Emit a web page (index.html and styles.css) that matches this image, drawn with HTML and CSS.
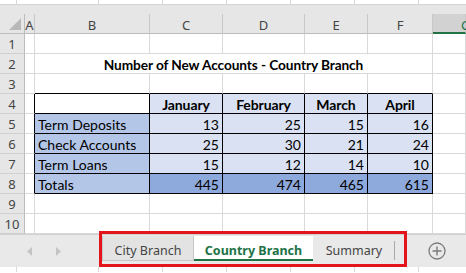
FILE: index.html
```html
<!DOCTYPE html>
<html>
<head>
<meta charset="utf-8">
<link rel="stylesheet" href="styles.css">
</head>
<body>
<div class="app">
  <div class="strip"></div>
  <div class="hdr-pad"></div>
  <div class="sheet">
    <div class="corner"><svg width="13" height="13" viewBox="0 0 13 13"><polygon points="12,0 12,12 0,12" fill="#b9b9b9"/></svg></div>
    <div class="ch">A</div><div class="ch">B</div><div class="ch">C</div><div class="ch">D</div><div class="ch">E</div><div class="ch">F</div><div class="ch sel">G</div>

    <div class="rh">1</div><div class="c"></div><div class="c"></div><div class="c"></div><div class="c"></div><div class="c"></div><div class="c"></div><div class="c"></div>

    <div class="rh">2</div><div class="c"></div><div class="c title">Number of New Accounts - Country Branch</div><div class="c"></div>

    <div class="rh">3</div><div class="c"></div><div class="c bb"></div><div class="c bb"></div><div class="c bb"></div><div class="c bb"></div><div class="c bb"></div><div class="c"></div>

    <div class="rh">4</div><div class="c br"></div><div class="c t"></div><div class="c t lt th">January</div><div class="c t lt th">February</div><div class="c t lt th">March</div><div class="c t lt th">April</div><div class="c"></div>

    <div class="rh">5</div><div class="c br"></div><div class="c t md">Term Deposits</div><div class="c t lt n">13</div><div class="c t lt n">25</div><div class="c t lt n">15</div><div class="c t lt n">16</div><div class="c"></div>

    <div class="rh">6</div><div class="c br"></div><div class="c t md">Check Accounts</div><div class="c t lt n">25</div><div class="c t lt n">30</div><div class="c t lt n">21</div><div class="c t lt n">24</div><div class="c"></div>

    <div class="rh">7</div><div class="c br"></div><div class="c t md">Term Loans</div><div class="c t lt n">15</div><div class="c t lt n">12</div><div class="c t lt n">14</div><div class="c t lt n">10</div><div class="c"></div>

    <div class="rh">8</div><div class="c br"></div><div class="c t md">Totals</div><div class="c t dk n">445</div><div class="c t dk n">474</div><div class="c t dk n">465</div><div class="c t dk n">615</div><div class="c"></div>

    <div class="rh">9</div><div class="c"></div><div class="c"></div><div class="c"></div><div class="c"></div><div class="c"></div><div class="c"></div><div class="c"></div>

    <div class="rh">10</div><div class="c"></div><div class="c"></div><div class="c"></div><div class="c"></div><div class="c"></div><div class="c"></div><div class="c"></div>
  </div>
  <div class="tabbar">
    <div class="nav">
      <svg width="6" height="9" viewBox="0 0 6 9"><polygon points="5,0 5,9 0,4.5" fill="#c4c4c4"/></svg>
      <svg width="6" height="9" viewBox="0 0 6 9"><polygon points="1,0 1,9 6,4.5" fill="#c4c4c4"/></svg>
    </div>
    <div class="tabs">
      <div class="tab">City Branch</div>
      <div class="tab active">Country Branch</div>
      <div class="tab plain">Summary</div>
    </div>
    <div class="add">
      <svg width="18" height="18" viewBox="0 0 18 18"><circle cx="9" cy="9" r="8" fill="none" stroke="#7a7a7a" stroke-width="1.3"/><path d="M9 4.5v9M4.5 9h9" stroke="#7a7a7a" stroke-width="1.4"/></svg>
    </div>
    <div class="mark"></div>
  </div>
  <div class="strip bottom"></div>
</div>
</body>
</html>
```

FILE: styles.css
```css
* { box-sizing: border-box; }
html, body { margin: 0; padding: 0; background: #fff; }
.app { width: 466px; height: 273px; overflow: hidden; position: relative; }

.strip {
  height: 5px;
  background: #fff repeating-linear-gradient(90deg, transparent 0 63px, #d9d9d9 63px 64px);
  background-position: 35px 0;
  border-bottom: 1px solid #d4d4d4;
}
.strip.bottom { border-bottom: 0; height: 5px; }
.hdr-pad { height: 9px; background: #e6e6e6; }

.sheet {
  display: grid;
  grid-template-columns: 25px 10px 115px 73px 82px 63px 65px 33px;
  grid-auto-rows: 20px;
  font-family: Lato, "Liberation Sans", sans-serif;
  font-size: 14px;
  color: #000;
}
.corner {
  background: #e6e6e6;
  border-right: 1px solid #bcbcbc;
  border-bottom: 1px solid #bcbcbc;
  display: flex; align-items: flex-end; justify-content: flex-end;
  padding: 0 2px 2px 0;
}
.ch {
  background: #e6e6e6;
  border-right: 1px solid #c8c8c8;
  border-bottom: 1px solid #bcbcbc;
  font-family: "Noto Sans", sans-serif;
  font-size: 13px;
  color: #444;
  display: flex; align-items: center; justify-content: center;
  padding-top: 2px;
}
.ch.sel { background: #d2d2d2; border-bottom: 2px solid #217346; color: #217346; justify-content: flex-start; padding-left: 28px; padding-top: 3px; }
.rh {
  background: #e6e6e6;
  border-right: 1px solid #bcbcbc;
  border-bottom: 1px solid #d0d0d0;
  font-family: "Noto Sans", sans-serif;
  font-size: 13px;
  color: #444;
  display: flex; align-items: center; justify-content: center;
  padding-top: 1px;
}
.c {
  border-right: 1px solid #d9d9d9;
  border-bottom: 1px solid #d9d9d9;
  padding: 2px 3px 0;
  line-height: 18px;
  white-space: nowrap;
}
.title { grid-column: span 5; text-align: center; font-weight: 700; font-size: 13.7px; letter-spacing: -0.1px; }
.bb { border-bottom-color: #000; }
.br { border-right-color: #000; }
.t { border-right-color: #000; border-bottom-color: #000; }
.lt { background: #d9e1f2; }
.md { background: #b4c6e7; }
.dk { background: #8ea9db; }
.th { text-align: center; font-weight: 700; letter-spacing: -0.1px; }
.n { text-align: right; }

.tabbar {
  height: 33px;
  background: #e9e9e9;
  border-top: 1px solid #d0d0d0;
  display: flex;
  align-items: flex-start;
  font-family: "Noto Sans", sans-serif;
  font-size: 12.5px;
  color: #444;
}
.nav { width: 102px; height: 32px; display: flex; align-items: center; gap: 22px; padding-left: 27px; }
.tabs { display: flex; height: 25px; margin-top: 1px; }
.tab {
  display: flex; align-items: center; justify-content: center;
  padding-top: 4px;
  background: #e3e3e3;
  border: 1px solid #c6c6c6;
  border-top: 0;
  width: 92px;
}
.tab.active {
  width: 119px;
  background: #fff;
  border: 0;
  border-bottom: 2px solid #217346;
  color: #217346;
  font-weight: 700;
  padding-top: 5px;
}
.tab.plain { background: transparent; border: 0; width: 82px; position: relative; }
.tab.plain::after { content: ""; position: absolute; right: 0; top: 5px; bottom: 1px; width: 1px; background: #a8a8a8; }
.add { margin-left: 33px; height: 32px; display: flex; align-items: center; }
.mark {
  position: absolute;
  left: 99px; top: 231px;
  width: 308px; height: 36px;
  border: 3px solid #e3141b;
  pointer-events: none;
}
```
